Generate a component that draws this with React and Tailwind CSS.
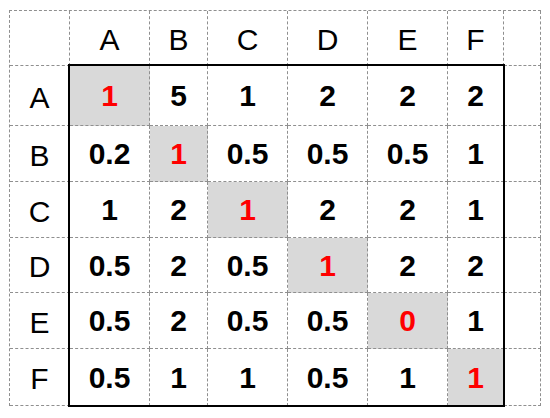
import React from "react";

const cols = ["A", "B", "C", "D", "E", "F"];

const data = [
  ["1", "5", "1", "2", "2", "2"],
  ["0.2", "1", "0.5", "0.5", "0.5", "1"],
  ["1", "2", "1", "2", "2", "1"],
  ["0.5", "2", "0.5", "1", "2", "2"],
  ["0.5", "2", "0.5", "0.5", "0", "1"],
  ["0.5", "1", "1", "0.5", "1", "1"],
];

const cell = "flex items-center justify-center border-r border-b border-dashed border-[#8f8f8f]";
const label = `${cell} pt-[3px] text-[30px] text-black`;

const App = () => {
  return (
    <div className="w-[550px] h-[418px] bg-white pl-[9px] pt-[10px]" style={{ fontFamily: '"Liberation Sans", Arial, sans-serif' }}>
      <div className="relative w-fit">
        <div className="grid grid-cols-[60px_80px_58px_80px_80px_80px_56px_37px] grid-rows-[55px_60px_56px_56px_55px_56px_57px] border-l border-t border-dashed border-[#8f8f8f]">
          <div className={cell}></div>
          {cols.map((c) => (
            <div key={c} className={label}>{c}</div>
          ))}
          <div className={cell}></div>

          {data.map((row, i) => (
            <React.Fragment key={i}>
              <div className={label}>{cols[i]}</div>
              {row.map((v, j) => (
                <div
                  key={j}
                  className={
                    i === j
                      ? `${cell} bg-[#d9d9d9] text-[30px] font-bold text-[#ff0000]`
                      : `${cell} text-[30px] font-bold text-black`
                  }
                >
                  {v}
                </div>
              ))}
              <div className={cell}></div>
            </React.Fragment>
          ))}
        </div>
        {/* black frame over the 6x6 values */}
        <div className="absolute left-[59px] top-[54px] w-[437px] h-[343px] border-[2px] border-black pointer-events-none"></div>
      </div>
    </div>
  );
};

export default App;
